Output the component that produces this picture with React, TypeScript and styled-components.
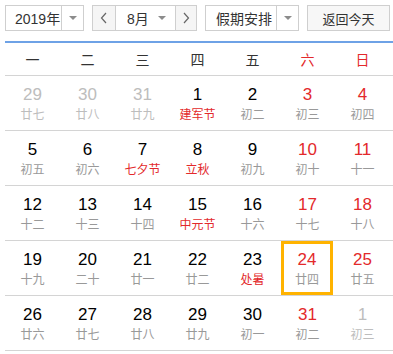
import React from "react";
import styled, { createGlobalStyle } from "styled-components";

const Global = createGlobalStyle`
  html, body { margin: 0; padding: 0; background: #fff; }
  body { font-family: "Liberation Sans", "Noto Sans CJK SC", sans-serif; overflow: hidden; }
`;

const RED = "#e3292b";
const CJK = `"Noto Sans CJK SC", "Liberation Sans", sans-serif`;
const MIX = `"Liberation Sans", "Noto Sans CJK SC", sans-serif`;

const Wrap = styled.div`
  padding: 5px 0 0 5px;
  width: 388px;
`;

const Toolbar = styled.div`
  display: flex;
  justify-content: space-between;
  width: 385px;
  height: 26px;
`;

const Box = styled.div<{ $w: number }>`
  box-sizing: border-box;
  width: ${(p) => p.$w}px;
  height: 26px;
  border: 1px solid #cfcfcf;
  display: flex;
  align-items: stretch;
  background: #fff;
`;

const Label = styled.div<{ $w: number; $pl: number }>`
  width: ${(p) => p.$w}px;
  padding-left: ${(p) => p.$pl}px;
  box-sizing: border-box;
  display: flex;
  align-items: center;
  font-size: 14px;
  color: #333;
  font-family: ${MIX};
  white-space: nowrap;
  gap: 9px;
`;

const DropArea = styled.div`
  flex: 1;
  border-left: 1px solid #cfcfcf;
  display: flex;
  align-items: center;
  justify-content: center;
`;

const Tri = styled.span`
  width: 0;
  height: 0;
  border-left: 4px solid transparent;
  border-right: 4px solid transparent;
  border-top: 4px solid #8c8c8c;
`;

const NavBtn = styled.div<{ $side: "l" | "r" }>`
  width: 22px;
  background: #f5f5f5;
  display: flex;
  align-items: center;
  justify-content: center;
  ${(p) => (p.$side === "l" ? "border-right: 1px solid #cfcfcf;" : "border-left: 1px solid #cfcfcf; flex: 1;")}
`;

const TodayBtn = styled.div`
  box-sizing: border-box;
  width: 83px;
  height: 26px;
  border: 1px solid #cfcfcf;
  background: #f7f7f7;
  display: flex;
  align-items: center;
  justify-content: center;
  font-family: ${CJK};
  font-size: 13px;
  color: #333;
  white-space: nowrap;
`;

const Chevron = ({ dir }: { dir: "l" | "r" }) => (
  <svg width="8" height="12" viewBox="0 0 8 12">
    <path
      d={dir === "l" ? "M6 1 L1.5 6 L6 11" : "M2 1 L6.5 6 L2 11"}
      fill="none"
      stroke="#666"
      strokeWidth="1.2"
    />
  </svg>
);

const BlueLine = styled.div`
  margin-top: 10px;
  height: 2px;
  background: #6ea2e6;
`;

const WeekRow = styled.div`
  display: grid;
  grid-template-columns: repeat(7, 55px);
  height: 32px;
  align-items: center;
  border-bottom: 1px solid #d4d4d4;
`;

const WeekCell = styled.div<{ $red?: boolean }>`
  text-align: center;
  font-family: ${CJK};
  font-size: 14px;
  color: ${(p) => (p.$red ? RED : "#333")};
`;

const DayRow = styled.div`
  display: grid;
  grid-template-columns: repeat(7, 55px);
  height: 54px;
  border-bottom: 1px solid #d4d4d4;
`;

const Cell = styled.div<{ $today?: boolean }>`
  margin: ${(p) => (p.$today ? "0 2px 0 1px" : "0")};
  display: flex;
  flex-direction: column;
  align-items: center;
  padding-top: 9px;
  box-sizing: border-box;
  ${(p) => (p.$today ? "box-shadow: inset 0 0 0 3px #ffb300;" : "")}
`;

const Num = styled.div<{ $c: string }>`
  font-family: "Liberation Sans", Arial, sans-serif;
  font-size: 17px;
  line-height: 20px;
  color: ${(p) => p.$c};
`;

const Lunar = styled.div<{ $c: string }>`
  font-family: ${CJK};
  font-size: 12px;
  line-height: 17px;
  color: ${(p) => p.$c};
`;

type Day = [number, string, number]; // num, lunar, flags: 1 other, 2 festival

const rows: Day[][] = [
  [[29, "廿七", 1], [30, "廿八", 1], [31, "廿九", 1], [1, "建军节", 2], [2, "初二", 0], [3, "初三", 0], [4, "初四", 0]],
  [[5, "初五", 0], [6, "初六", 0], [7, "七夕节", 2], [8, "立秋", 2], [9, "初九", 0], [10, "初十", 0], [11, "十一", 0]],
  [[12, "十二", 0], [13, "十三", 0], [14, "十四", 0], [15, "中元节", 2], [16, "十六", 0], [17, "十七", 0], [18, "十八", 0]],
  [[19, "十九", 0], [20, "二十", 0], [21, "廿一", 0], [22, "廿二", 0], [23, "处暑", 2], [24, "廿四", 0], [25, "廿五", 0]],
  [[26, "廿六", 0], [27, "廿七", 0], [28, "廿八", 0], [29, "廿九", 0], [30, "初一", 0], [31, "初二", 0], [1, "初三", 1]],
];

const weeks = ["一", "二", "三", "四", "五", "六", "日"];

export default function App() {
  return (
    <>
      <Global />
      <Wrap>
        <Toolbar>
          <Box $w={79}>
            <Label $w={55} $pl={9}>2019年</Label>
            <DropArea><Tri /></DropArea>
          </Box>
          <Box $w={105}>
            <NavBtn $side="l"><Chevron dir="l" /></NavBtn>
            <Label $w={59} $pl={11}>8月<Tri /></Label>
            <NavBtn $side="r"><Chevron dir="r" /></NavBtn>
          </Box>
          <Box $w={94}>
            <Label $w={70} $pl={10}>假期安排</Label>
            <DropArea><Tri /></DropArea>
          </Box>
          <TodayBtn>返回今天</TodayBtn>
        </Toolbar>
        <BlueLine />
        <WeekRow>
          {weeks.map((w, i) => (
            <WeekCell key={w} $red={i >= 5}>{w}</WeekCell>
          ))}
        </WeekRow>
        {rows.map((r, ri) => (
          <DayRow key={ri}>
            {r.map(([n, l, f], ci) => {
              const other = f === 1;
              const fest = f === 2;
              const weekend = ci >= 5;
              const numC = other ? "#bdbdbd" : weekend ? RED : "#000";
              const lunC = other ? "#bdbdbd" : fest ? RED : "#999";
              const today = ri === 3 && ci === 5;
              return (
                <Cell key={ci} $today={today}>
                  <Num $c={numC}>{n}</Num>
                  <Lunar $c={lunC}>{l}</Lunar>
                </Cell>
              );
            })}
          </DayRow>
        ))}
      </Wrap>
    </>
  );
}
